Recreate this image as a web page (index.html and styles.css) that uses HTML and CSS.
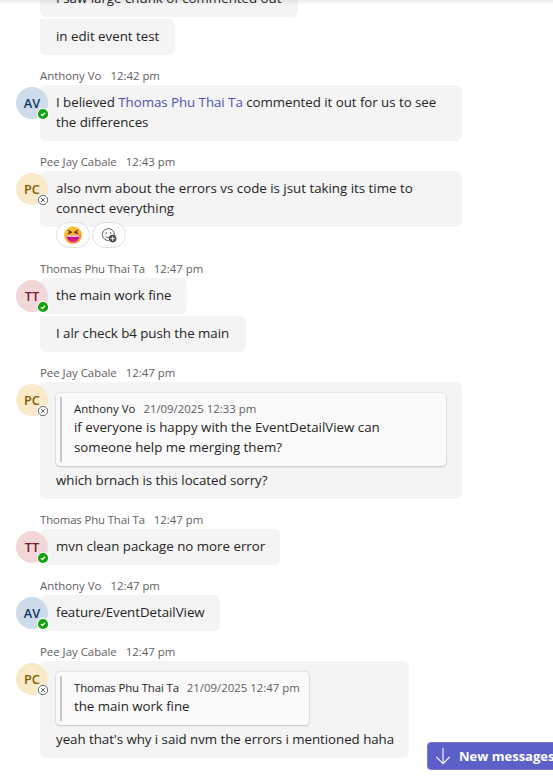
FILE: index.html
```html
<!DOCTYPE html>
<html lang="en">
<head>
<meta charset="utf-8">
<title>Chat</title>
<link rel="stylesheet" href="styles.css">
</head>
<body>
<svg width="0" height="0" class="defs" aria-hidden="true">
  <symbol id="available" viewBox="0 0 12 12"><circle cx="6" cy="6" r="6" fill="#fff"/><circle cx="6" cy="6" r="5.1" fill="#13a10e"/><path d="M4 6.1l1.4 1.4L8.1 4.8" fill="none" stroke="#fff" stroke-width="1.3"/></symbol>
  <symbol id="offline" viewBox="0 0 12 12"><circle cx="6" cy="6" r="6" fill="#fff"/><circle cx="6" cy="6" r="4.7" fill="#fff" stroke="#616161" stroke-width="1"/><path d="M4.1 4.1l3.8 3.8M7.9 4.1L4.1 7.9" stroke="#616161" stroke-width="1"/></symbol>
</svg>
<main class="chat">
  <div class="bubble cut w258"><p>I saw large chunk of commented out</p></div>
  <div class="bubble follow w135"><p>in edit event test</p></div>

  <section class="group">
    <header><span>Anthony Vo</span><time>12:42 pm</time></header>
    <div class="row"><div class="avatar blue">AV<svg class="presence"><use href="#available"/></svg></div>
    <div class="bubble w422"><p class="snug">I believed <a>Thomas Phu Thai Ta</a> commented it out for us to see<br>the differences</p></div></div>
  </section>

  <section class="group">
    <header><span>Pee Jay Cabale</span><time>12:43 pm</time></header>
    <div class="row"><div class="avatar gold">PC<svg class="presence"><use href="#offline"/></svg></div>
    <div class="bubble w422"><p>also nvm about the errors vs code is jsut taking its time to<br>connect everything</p></div></div>
    <div class="reactions">
      <button><svg width="18" height="18" viewBox="0 0 18 18"><defs><linearGradient id="face" x1="0" y1="0" x2="0.4" y2="1"><stop offset="0" stop-color="#ffd23c"/><stop offset="0.55" stop-color="#ffb02e"/><stop offset="1" stop-color="#f9843c"/></linearGradient></defs><circle cx="9" cy="9" r="8.8" fill="url(#face)"/><path d="M4 4.2l3.2 1.9L4.1 7.6M14 4.2l-3.2 1.9 3.1 1.5" fill="none" stroke="#4d2b20" stroke-width="1.2"/><path d="M2.8 9.5h12.4c0 3.6-2.6 6.2-6.2 6.2s-6.2-2.6-6.2-6.2z" fill="#b3128f"/><path d="M3 9.5h12l-.4 1.2H3.4z" fill="#fff"/><path d="M5 14.2c2-2 6-2 8 0-2.2 2-5.8 2-8 0z" fill="#e61d92"/></svg></button>
      <button><svg width="16" height="16" viewBox="0 0 16 16"><path d="M13.4 8.2A6 6 0 1 0 7.6 13.6" fill="none" stroke="#616161"/><circle cx="5.4" cy="6" r=".8" fill="#424242"/><circle cx="9.6" cy="6" r=".8" fill="#424242"/><path d="M4.5 9.2c1 1.2 2.3 1.5 3.6 1.2" fill="none" stroke="#616161"/><circle cx="11.6" cy="11.6" r="3.8" fill="#4d4d4d"/><path d="M11.6 9.5v4.2M9.5 11.6h4.2" stroke="#fff"/></svg></button>
    </div>
  </section>

  <section class="group">
    <header><span class="tight">Thomas Phu Thai Ta</span><time>12:47 pm</time></header>
    <div class="row"><div class="avatar pink">TT<svg class="presence"><use href="#available"/></svg></div>
    <div class="bubble w147"><p class="snug">the main work fine</p></div></div>
    <div class="bubble follow w206"><p class="snug">I alr check b4 push the main</p></div>
  </section>

  <section class="group">
    <header><span>Pee Jay Cabale</span><time>12:47 pm</time></header>
    <div class="row"><div class="avatar gold">PC<svg class="presence"><use href="#offline"/></svg></div>
    <div class="bubble reply w422">
      <blockquote><div class="source"><b>Anthony Vo</b><time>21/09/2025 12:33 pm</time></div><p>if everyone is happy with the EventDetailView can<br>someone help me merging them?</p></blockquote>
      <p class="snug">which brnach is this located sorry?</p>
    </div></div>
  </section>

  <section class="group">
    <header><span class="tight">Thomas Phu Thai Ta</span><time>12:47 pm</time></header>
    <div class="row"><div class="avatar pink">TT<svg class="presence"><use href="#available"/></svg></div>
    <div class="bubble w240"><p>mvn clean package no more error</p></div></div>
  </section>

  <section class="group">
    <header><span>Anthony Vo</span><time>12:47 pm</time></header>
    <div class="row"><div class="avatar blue">AV<svg class="presence"><use href="#available"/></svg></div>
    <div class="bubble w180"><p class="snug">feature/EventDetailView</p></div></div>
  </section>

  <section class="group">
    <header><span>Pee Jay Cabale</span><time>12:47 pm</time></header>
    <div class="row"><div class="avatar gold">PC<svg class="presence"><use href="#offline"/></svg></div>
    <div class="bubble reply w369">
      <blockquote class="short"><div class="source"><b class="tight">Thomas Phu Thai Ta</b><time>21/09/2025 12:47 pm</time></div><p class="snug">the main work fine</p></blockquote>
      <p class="snug">yeah that's why i said nvm the errors i mentioned haha</p>
    </div></div>
  </section>
</main>
<button class="new-messages"><svg width="16" height="18" viewBox="0 0 16 18"><path d="M8 1v15.5M1.2 9.8L8 16.6l6.8-6.8" fill="none" stroke="#fff" stroke-width="1.1"/></svg>New messages</button>
</body>
</html>
```
FILE: styles.css
```css
* { box-sizing: border-box; }
html, body { height: 100%; }
body {
  margin: 0;
  overflow: hidden;
  background: #fff;
  color: #242424;
  font: 13.3px/20px "Open Sans", "Noto Sans", sans-serif;
}
body::before {
  content: "";
  position: absolute;
  z-index: 1;
  inset: 0 0 auto;
  height: 5px;
  background: linear-gradient(rgba(0,0,0,.07), rgba(0,0,0,0));
}
p, blockquote { margin: 0; }
p { white-space: nowrap; }
a { color: #4f52b2; }
.snug { letter-spacing: -.035px; }
.tight { letter-spacing: -.13px; }
.defs { position: absolute; }
.chat { padding-left: 40px; }
.bubble {
  padding: 7px 16px 9px;
  border-radius: 6px;
  background: #f4f4f4;
}
.cut { margin-top: -19px; border-top-left-radius: 0; }
.follow { margin-top: 2px; border-top-left-radius: 0; }
.w258 { width: 258px; } .w135 { width: 135px; } .w422 { width: 422px; }
.w147 { width: 147px; } .w206 { width: 206px; } .w240 { width: 240px; }
.w180 { width: 180px; } .w369 { width: 369px; }
.group header {
  display: flex;
  gap: 9px;
  height: 30px;
  padding-top: 13px;
  font-size: 11.4px;
  line-height: 16px;
  color: #616161;
}
.row { display: flex; margin-left: -24px; }
.avatar {
  position: relative;
  z-index: 1;
  flex: none;
  width: 32px;
  height: 32px;
  margin: 2px -8px 0 0;
  border-radius: 50%;
  font-size: 12.8px;
  font-weight: 600;
  line-height: 32px;
  text-align: center;
}
.blue { background: #cddbeb; color: #11365c; }
.gold { background: #f8e9c8; color: #835b00; }
.pink { background: #f3d6d8; color: #751d2b; }
.presence { position: absolute; right: -1px; bottom: -1px; width: 12px; height: 12px; }
.reactions {
  position: relative;
  display: flex;
  gap: 2px;
  height: 26px;
  margin: -5px 0 0 16px;
}
.reactions button {
  display: flex;
  align-items: center;
  justify-content: center;
  width: 34px;
  height: 26px;
  padding: 0;
  border: 1px solid #e0e0e0;
  border-radius: 13px;
  background: #fff;
}
.reply { padding-top: 11px; padding-bottom: 9px; }
blockquote {
  position: relative;
  width: 390px;
  margin-bottom: 4px;
  padding: 8px 8px 9px 18px;
  border-radius: 4px;
  background: #fafafa;
  box-shadow: 0 0 2px rgba(0,0,0,.22), 0 1px 2px rgba(0,0,0,.14);
}
blockquote::before {
  content: "";
  position: absolute;
  left: 4px;
  top: 4px;
  bottom: 4px;
  width: 2px;
  background: #c7c7c7;
}
.short { width: 253px; }
.source {
  display: flex;
  gap: 8px;
  font-size: 11.4px;
  line-height: 16px;
  white-space: nowrap;
  color: #616161;
}
.source b { font-weight: 400; color: #242424; }
.new-messages {
  position: absolute;
  left: 427px;
  top: 742px;
  display: flex;
  align-items: center;
  gap: 8px;
  width: 140px;
  height: 28px;
  padding: 0 0 0 7px;
  border: 1px solid #7579d0;
  border-radius: 4px;
  background: #5b5fc7;
  color: #fff;
  font: 700 13px/20px "Open Sans", sans-serif;
  white-space: nowrap;
}
```
